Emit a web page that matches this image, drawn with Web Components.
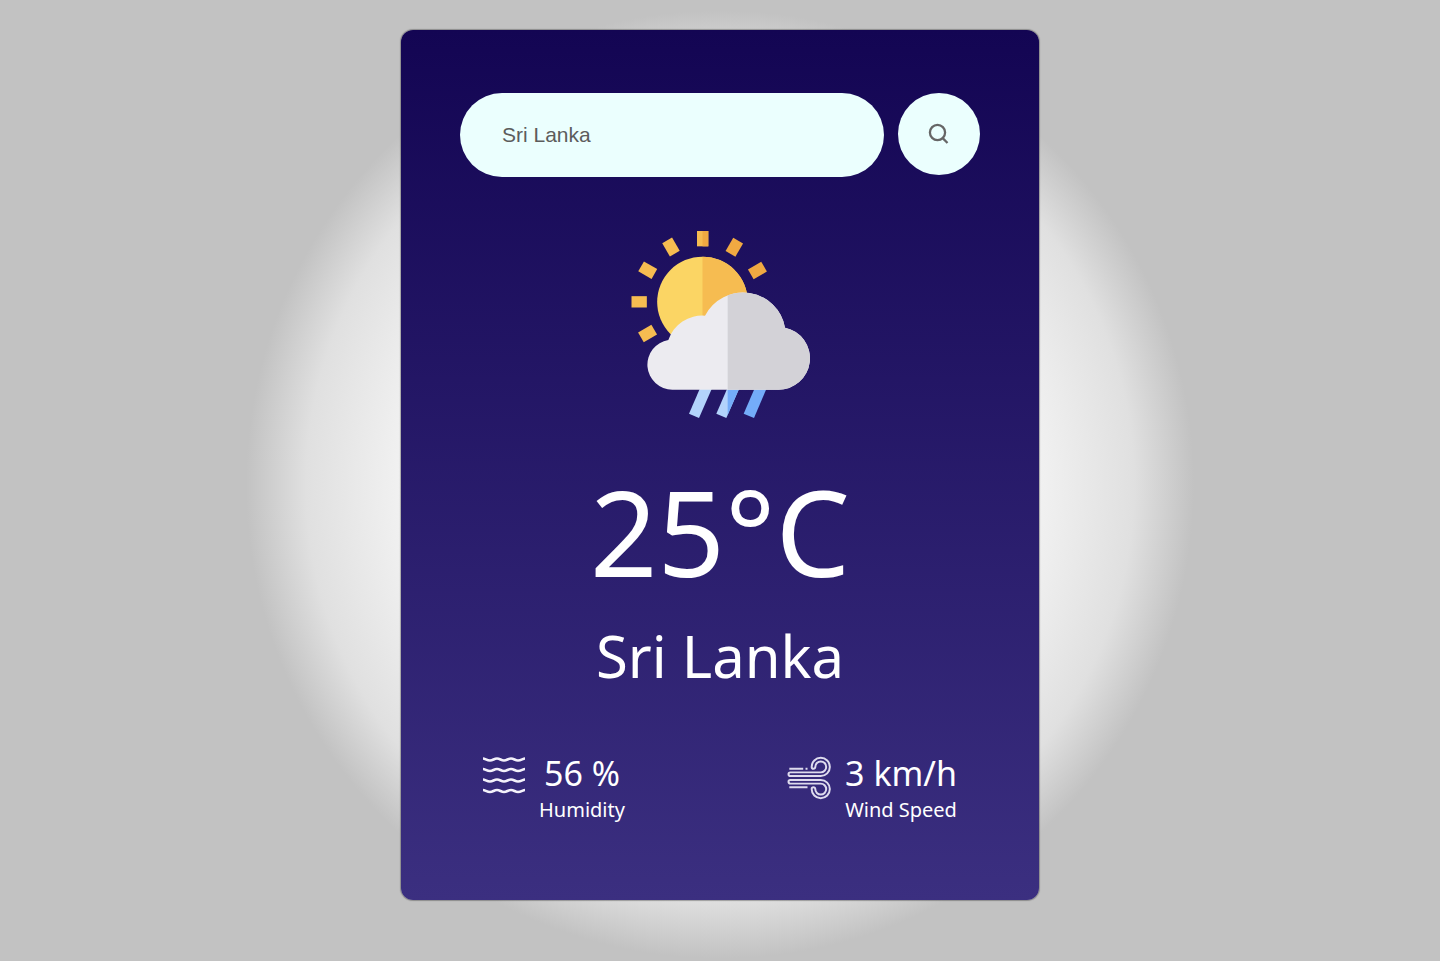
<!DOCTYPE html>
<html lang="en">
<head>
<meta charset="utf-8">
<title>Weather</title>
<style>
  html { min-height: 100%; }
  body {
    margin: 0;
    min-height: 100vh;
    box-sizing: border-box;
    padding: 30px 16px;
    font-family: "Noto Sans", "Open Sans", sans-serif;
    background: radial-gradient(circle at 50% calc(50% + 4px), #fff 240px, #e0e0e0 414px, #c2c2c2 474px);
  }
</style>
</head>
<body>
<weather-card>
  <weather-search slot="search" place="Sri Lanka"></weather-search>
  <weather-now slot="now">
    <span slot="temp">25°C</span>
    <span slot="city">Sri Lanka</span>
  </weather-now>
  <weather-stat slot="stats" icon="humidity">56 %<span slot="label">Humidity</span></weather-stat>
  <weather-stat slot="stats" icon="wind">3 km/h<span slot="label">Wind Speed</span></weather-stat>
</weather-card>

<script>
class WeatherCard extends HTMLElement {
  constructor() {
    super();
    this.attachShadow({ mode: "open" }).innerHTML = `
      <style>
        :host {
          display: block;
          box-sizing: border-box;
          max-width: 638px;
          margin: 0 auto;
          padding: 63px 59px 76px;
          border-radius: 12px;
          color: #fff;
          background: linear-gradient(180deg, #130553, #3b2f80);
          box-shadow: 0 0 1px 1px rgba(60, 60, 60, 0.4);
        }
        .stats {
          display: flex;
          flex-wrap: wrap;
          justify-content: space-between;
          gap: 24px;
          padding: 0 23px;
          margin-top: 54px;
        }
      </style>
      <slot name="search"></slot>
      <slot name="now"></slot>
      <div class="stats"><slot name="stats"></slot></div>`;
  }
}

class WeatherSearch extends HTMLElement {
  constructor() {
    super();
    this.attachShadow({ mode: "open" }).innerHTML = `
      <style>
        :host { display: block; }
        form { display: flex; align-items: flex-start; gap: 14px; margin: 0; }
        input {
          flex: 1;
          min-width: 0;
          height: 84px;
          box-sizing: border-box;
          padding: 0 42px;
          border: 0;
          border-radius: 42px;
          outline: 0;
          background: #ebfffe;
          color: #5c5c5c;
          font: 21px "Liberation Sans", Arial, sans-serif;
        }
        button {
          flex: none;
          display: grid;
          place-items: center;
          width: 82px;
          height: 82px;
          padding: 0;
          border: 0;
          border-radius: 50%;
          background: #ebfffe;
          cursor: pointer;
        }
        svg { display: block; }
      </style>
      <form>
        <input type="text" aria-label="City name" spellcheck="false">
        <button type="button" aria-label="Search">
          <svg width="22" height="22" viewBox="0 0 22 22" fill="none" stroke="#666" stroke-width="2.3">
            <circle cx="9.5" cy="9.5" r="7.6"/>
            <path d="M14.2 14.6 L19.5 20"/>
          </svg>
        </button>
      </form>`;
  }
  connectedCallback() {
    this.shadowRoot.querySelector("input").value = this.getAttribute("place") || "";
  }
}

class WeatherNow extends HTMLElement {
  constructor() {
    super();
    const ray = (angle, fill) =>
      `<rect x="231" y="33" width="34" height="46" fill="${fill}" transform="rotate(${angle} 247.5 246)"/>`;
    const cloud = "M157 509 A75 75 0 0 1 145 360 A107 107 0 0 1 255 287 A128 128 0 0 1 495 323 A94 94 0 0 1 473 509 Z";
    this.attachShadow({ mode: "open" }).innerHTML = `
      <style>
        :host { display: block; margin-top: 54px; text-align: center; }
        svg { display: block; margin: 0 auto 54px; overflow: visible; }
        .temp { font-size: 118px; line-height: 120px; }
        .city { margin-top: 24px; font-size: 58px; line-height: 80px; }
      </style>
      <svg width="178" height="187" viewBox="33 33 534 561" role="img" aria-label="Sun, cloud and rain">
        <defs>
          <clipPath id="sunRight"><rect x="247.5" y="30" width="330" height="570"/></clipPath>
          <clipPath id="cloudRight"><rect x="323" y="30" width="250" height="570"/></clipPath>
        </defs>
        ${[-120, -90, -60, -30, 0].map(a => ray(a, "#f6bc51")).join("")}
        ${[30, 60].map(a => ray(a, "#f0a942")).join("")}
        <rect x="247.5" y="33" width="17.5" height="46" fill="#f0a942"/>
        <circle cx="247.5" cy="246" r="136" fill="#fbd564"/>
        <circle cx="247.5" cy="246" r="136" fill="#f6bc51" clip-path="url(#sunRight)"/>
        <path d="M240 505 H276 L237 594 L207 581 Z" fill="#b3d3fb"/>
        <path d="M322 505 H358 L319 594 L289 581 Z" fill="#b3d3fb"/>
        <path d="M322 505 H358 L319 594 L289 581 Z" fill="#74acf9" clip-path="url(#cloudRight)"/>
        <path d="M404 505 H440 L402 594 L371 581 Z" fill="#74acf9"/>
        <path d="${cloud}" fill="#ecebf0"/>
        <path d="${cloud}" fill="#d3d2d7" clip-path="url(#cloudRight)"/>
      </svg>
      <div class="temp"><slot name="temp"></slot></div>
      <div class="city"><slot name="city"></slot></div>`;
  }
}

const wave = y => `<path d="M0 ${y - 1} C2 ${y - 1} 4 ${y + 1} 7 ${y + 1} S11 ${y - 1} 14 ${y - 1} S18 ${y + 1} 21 ${y + 1} S25 ${y - 1} 28 ${y - 1} S32 ${y + 1} 35 ${y + 1} S40 ${y - 1} 42 ${y - 1}"/>`;
const gust = `<path d="M137 97 H45 a5.5 5.5 0 0 0 0 11 H137 A27.5 27.5 0 1 0 109.5 80.5 a5.5 5.5 0 0 0 11 0 A16.5 16.5 0 1 1 137 97 Z"/>`;
const STAT_ICONS = {
  humidity: `<svg width="42" height="38" viewBox="0 0 42 38" fill="none" stroke="#f4f2fb" stroke-width="2.6" aria-hidden="true">
      ${[2.5, 13, 23.5, 34].map(wave).join("")}</svg>`,
  wind: `<svg width="43" height="42" viewBox="38 51 130 126" fill="none" stroke="#dedbee" stroke-width="6" aria-hidden="true">
      ${gust}<g transform="matrix(1 0 0 -1 0 228)">${gust}</g>
      <path d="M42 86 H84 M91 86 H97 M42 142 H97"/></svg>`
};

class WeatherStat extends HTMLElement {
  constructor() {
    super();
    this.attachShadow({ mode: "open" });
  }
  connectedCallback() {
    this.shadowRoot.innerHTML = `
      <style>
        :host { display: flex; align-items: flex-start; gap: 14px; }
        svg { display: block; margin-top: 7px; overflow: visible; }
        .text { text-align: center; }
        .value { font-size: 34px; line-height: 46px; }
        .label { font-size: 20px; line-height: 28px; }
      </style>
      ${STAT_ICONS[this.getAttribute("icon")]}
      <div class="text">
        <div class="value"><slot></slot></div>
        <div class="label"><slot name="label"></slot></div>
      </div>`;
  }
}

customElements.define("weather-card", WeatherCard);
customElements.define("weather-search", WeatherSearch);
customElements.define("weather-now", WeatherNow);
customElements.define("weather-stat", WeatherStat);
</script>
</body>
</html>
